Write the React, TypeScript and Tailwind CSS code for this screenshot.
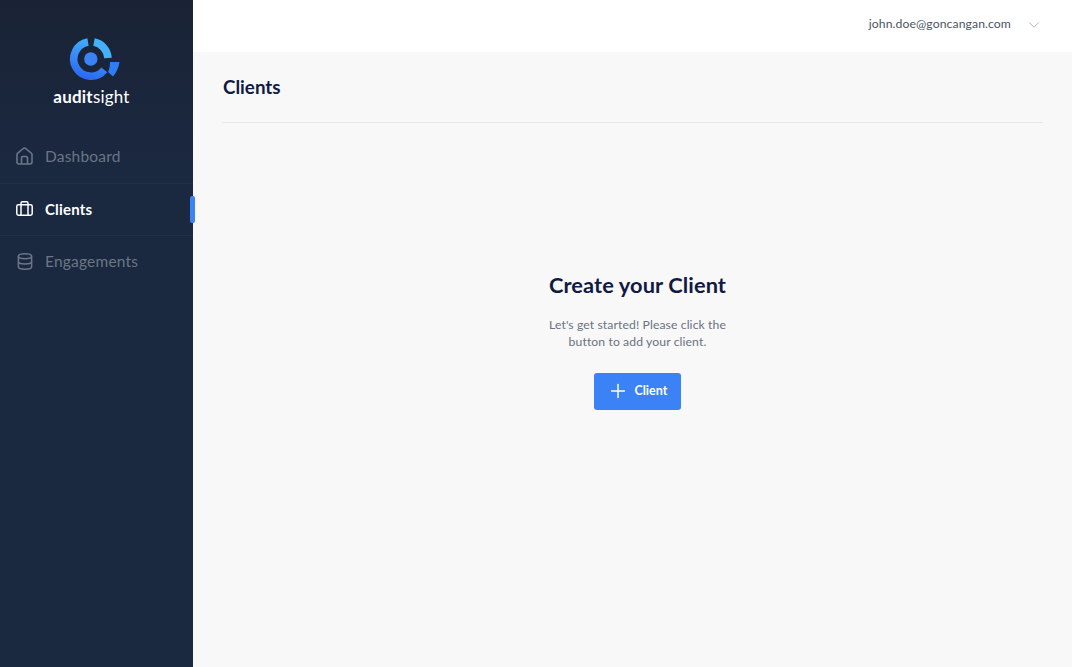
import { ChevronDown, Plus } from 'lucide-react'

const font = { fontFamily: 'Lato, sans-serif' }

function Logo() {
  return (
    <svg className="ml-[-1px]" width="60" height="48" viewBox="0 0 60 48" fill="none">
      <defs>
        <linearGradient id="ring" gradientUnits="userSpaceOnUse" x1="36" y1="4" x2="24" y2="46">
          <stop offset="0" stopColor="#46b4fb" />
          <stop offset="1" stopColor="#2a66f1" />
        </linearGradient>
      </defs>
      {/* origin is x 61, y 34 on the page */}
      <path d="M27 8.03 A17.2 17.2 0 1 0 43.3 35.8" stroke="url(#ring)" strokeWidth="7.6" />
      <path d="M33 8.1 A17.2 17.2 0 0 1 47 24" stroke="#45b0fa" strokeWidth="7.6" />
      <path d="M49 28 L58.500 28 C57.800 33.400 55.500 38.400 52 42.500 L47 38 C48.500 35 49 31.400 49 28 Z" fill="#2f7cf5" />
      <circle cx="29.800" cy="25" r="6.700" fill="#3b82f6" />
    </svg>
  )
}

function NavItem({ icon, label, active, last }: { icon: React.ReactNode; label: string; active?: boolean; last?: boolean }) {
  return (
    <div className={`relative flex h-[52.500px] items-center gap-[12px] pb-[1px] pl-[16px] tracking-[0.2px] ${last ? '' : 'border-b border-[#232f48]'} ${active ? 'text-[15px] font-bold text-white' : 'text-[15.500px] text-[#6b7686]'}`}>
      <div className="flex w-[17px] justify-center">{icon}</div>
      <span>{label}</span>
      {active && <div className="absolute top-[12px] right-[-2px] h-[27px] w-[5px] rounded-[2px] bg-[#3b82f6]" />}
    </div>
  )
}

export default function App() {
  return (
    <div className="flex h-[667px] w-[1072px] overflow-hidden bg-[#f8f8f8]" style={font}>
      <aside className="relative z-10 w-[193px] shrink-0 bg-gradient-to-b from-[#1a2335] to-[#1a2840] to-[25%]">
        <div className="flex h-[131px] flex-col items-center pt-[34px] pr-[10px]">
          <Logo />
          <div className="mt-[5px] text-[17px] leading-[20px] tracking-[0.2px] text-white">
            <span className="font-bold">audit</span>
            <span>sight</span>
          </div>
        </div>
        <NavItem
          label="Dashboard"
          icon={
            <svg width="17" height="18" viewBox="0 0 17 18" fill="none" stroke="currentColor" strokeWidth="1.6">
              <path d="M1 7.500Q1 6.500 2 5.800L7.300 1.500Q8.500.6 9.700 1.500L15 5.800Q16 6.500 16 7.500V15a2 2 0 0 1-2 2H3a2 2 0 0 1-2-2Z" strokeLinejoin="round" />
              <path d="M5.500 17v-6a1.500 1.500 0 0 1 1.500-1.500h3a1.500 1.500 0 0 1 1.500 1.500v6" />
            </svg>
          }
        />
        <NavItem
          active
          label="Clients"
          icon={
            <svg width="17" height="15" viewBox="0 0 17 15" fill="none" stroke="currentColor" strokeWidth="1.5">
              <rect x="0.800" y="3.800" width="15.400" height="10.400" rx="1.600" />
              <path d="M5 14V2.200A1.400 1.400 0 0 1 6.400.8h4.200A1.400 1.400 0 0 1 12 2.200V14" />
            </svg>
          }
        />
        <NavItem
          last
          label="Engagements"
          icon={
            <svg width="16" height="17" viewBox="0 0 16 18" fill="none" stroke="currentColor" strokeWidth="1.6">
              <ellipse cx="8" cy="3.400" rx="7" ry="2.600" />
              <path d="M1 3.400v11.200C1 16 4 17.200 8 17.200s7-1.200 7-2.600V3.400" />
              <path d="M1 9c0 1.400 3 2.600 7 2.600S15 10.400 15 9" />
            </svg>
          }
        />
      </aside>

      <div className="flex min-w-0 flex-1 flex-col">
        <header className="flex h-[52px] items-center justify-end bg-white pr-[29px] text-[12.200px] tracking-[0.1px] text-[#4b5563]">
          <span className="mb-[3px]">john.doe@goncangan.com</span>
          <ChevronDown className="mb-[3px] ml-[14px] h-[18px] w-[18px] text-[#9ca3af]" strokeWidth={1.1} />
        </header>

        <main className="flex-1 px-[29px]">
          <h1 className="flex h-[71px] items-center border-b border-[#e8e8e8] pl-[1px] text-[18.800px] font-bold text-[#101a42]">
            Clients
          </h1>
          <div className="ml-[10px] flex flex-col items-center pt-[145px]">
            <h2 className="text-[21.800px] leading-[34px] font-bold tracking-[0.1px] text-[#101a42]">Create your Client</h2>
            <p className="mt-[15px] text-center text-[12.200px] leading-[16.500px] tracking-[0.1px] text-[#6b7280]">
              Let's get started! Please click the
              <br />
              button to add your client.
            </p>
            <button className="mt-[23px] flex h-[36.500px] w-[87px] items-center gap-[6px] rounded-[3px] bg-[#3b82f6] pl-[12.500px] text-[12.500px] font-bold text-white">
              <Plus className="h-[22px] w-[22px]" strokeWidth={1.6} />
              Client
            </button>
          </div>
        </main>
      </div>
    </div>
  )
}
